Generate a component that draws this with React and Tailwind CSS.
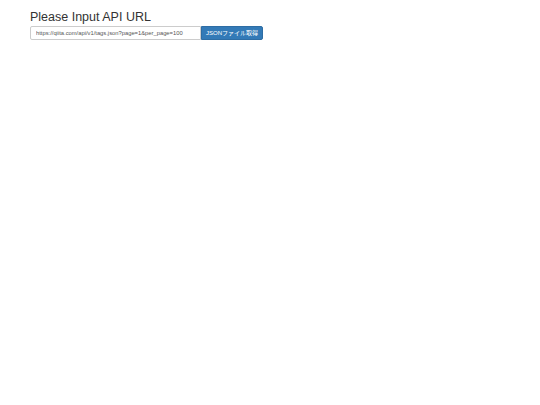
import { useState } from "react";

function App() {
  const [url, setUrl] = useState("https://qiita.com/api/v1/tags.json?page=1&per_page=100");

  return (
    <div className="min-h-[405px] bg-white pl-[30px] pt-[10px] font-['Liberation_Sans',Arial,sans-serif]">
      <h1 className="text-[12.5px] leading-[14px] text-[#333] font-normal">
        Please Input API URL
      </h1>

      <div className="mt-[2px] flex h-[14px] w-[233px]">
        <input
          className="h-[14px] w-[171px] rounded-l-[2px] border border-[#ccc] bg-white pl-[5px] text-[5.8px] leading-[12px] text-[#555] outline-none"
          value={url}
          onChange={e => setUrl(e.target.value)}
        />
        <button className="h-[14px] w-[62px] rounded-r-[2px] border border-[#2e6da4] bg-[#337ab7] text-[6px] leading-[12px] text-white font-['Liberation_Sans','Noto_Sans_CJK_JP',sans-serif]">
          JSONファイル取得
        </button>
      </div>
    </div>
  );
}

export default App;
